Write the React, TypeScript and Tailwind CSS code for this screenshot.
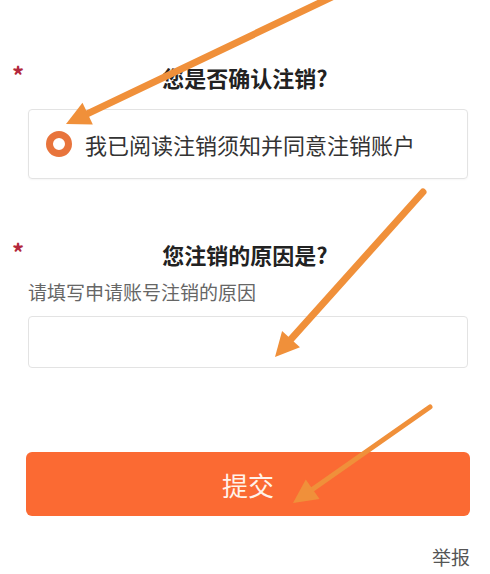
import React from 'react';

const font = { fontFamily: '"Noto Sans CJK SC", "Noto Sans", sans-serif' };

// Orange annotation arrows drawn over the form
function Arrow({ x1, y1, x2, y2, w }: { x1: number; y1: number; x2: number; y2: number; w: number }) {
  const dx = x2 - x1;
  const dy = y2 - y1;
  const len = Math.hypot(dx, dy);
  const ux = dx / len;
  const uy = dy / len;
  const headLen = 24;
  const headW = 12;
  const bx = x2 - ux * headLen;
  const by = y2 - uy * headLen;
  const px = -uy;
  const py = ux;
  return (
    <g>
      <line x1={x1} y1={y1} x2={bx + ux * 4} y2={by + uy * 4} stroke="#f0903a" strokeWidth={w} strokeLinecap="round" />
      <polygon
        points={`${x2},${y2} ${bx + px * headW},${by + py * headW} ${bx - px * headW},${by - py * headW}`}
        fill="#f0903a"
      />
    </g>
  );
}

function Required() {
  return <span className="w-[12px] text-[24px] leading-none font-bold text-[#b3283c] -mt-[4px]">*</span>;
}

export default function App() {
  return (
    <div className="relative w-[490px] h-[574px] bg-white overflow-hidden" style={font}>
      <div className="flex flex-col pt-[62px]">
        <div className="flex items-center px-[12px]">
          <Required />
          <div className="flex-1 text-center text-[22px] leading-[30px] font-bold text-[#222]">您是否确认注销?</div>
          <span className="w-[12px]" />
        </div>

        <div className="ml-[28px] mr-[22px] mt-[17px] h-[70px] flex items-center gap-[13px] px-[17px] border border-[#e3e3e3] rounded-[4px] shadow-[0_1px_2px_rgba(0,0,0,0.04)]">
          <span className="w-[26px] h-[26px] rounded-full border-[7px] border-[#e8743c] bg-white" />
          <span className="text-[22px] leading-[30px] text-[#333]">我已阅读注销须知并同意注销账户</span>
        </div>

        <div className="flex items-center px-[12px] mt-[60px]">
          <Required />
          <div className="flex-1 text-center text-[22px] leading-[30px] font-bold text-[#222]">您注销的原因是?</div>
          <span className="w-[12px]" />
        </div>

        <div className="px-[28px] mt-[9px] text-[19px] leading-[28px] text-[#666]">请填写申请账号注销的原因</div>

        <div className="ml-[28px] mr-[22px] mt-[10px] h-[52px] border border-[#e3e3e3] rounded-[4px]" />

        <button className="ml-[26px] mr-[20px] mt-[84px] h-[64px] rounded-[6px] bg-[#fb6a33] text-[26px] text-[#fff3ea]">提交</button>

        <div className="flex justify-end pr-[20px] mt-[28px] text-[19px] leading-[26px] text-[#555]">举报</div>
      </div>

      <svg className="absolute inset-0 pointer-events-none" width="490" height="574" viewBox="0 0 490 574">
        <Arrow x1={334} y1={-4} x2={66} y2={124} w={7} />
        <Arrow x1={423} y1={192} x2={275} y2={357} w={7} />
        <Arrow x1={430} y1={407} x2={293} y2={503} w={5} />
      </svg>
    </div>
  );
}
